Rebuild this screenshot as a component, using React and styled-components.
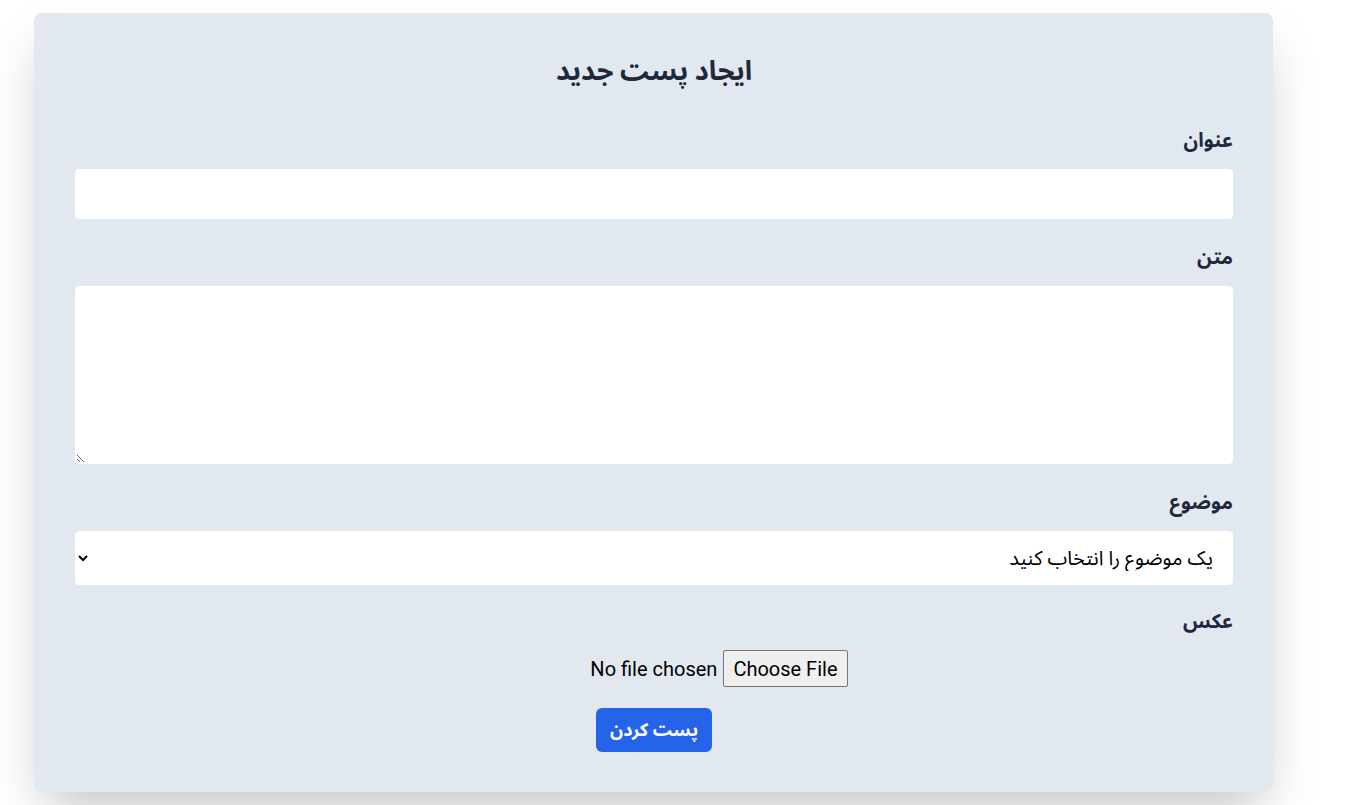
import React from 'react';
import styled, { createGlobalStyle } from 'styled-components';

const GlobalStyle = createGlobalStyle`
    html, body {
        margin: 0;
        padding: 0;
        background-color: #ffffff;
    }

    body {
        font-family: Roboto, "Noto Sans Arabic", "DejaVu Sans", sans-serif;
    }

    * {
        box-sizing: border-box;
    }
`;

const Page = styled.div`
    min-height: 805px;
    padding: 13px 0 0 34px;
`;

const Card = styled.div`
    width: 1239px;
    background-color: #e2e8f0;
    border-radius: 8px;
    box-shadow: 0 25px 50px -12px rgba(0, 0, 0, 0.25);
    padding: 40px 40px 40px 41px;
    direction: rtl;
`;

const Title = styled.h2`
    margin: 0 0 35px;
    text-align: center;
    font-size: 27px;
    line-height: 36px;
    font-weight: 700;
    color: #1e293b;
`;

const Form = styled.form`
    display: flex;
    flex-direction: column;
    gap: 22px;
`;

const Field = styled.div`
    display: flex;
    flex-direction: column;
    margin-top: ${(props) => props.$pull ? `-${props.$pull}px` : '0'};
`;

const Label = styled.label`
    display: block;
    margin-bottom: 13px;
    font-size: 20px;
    line-height: 32px;
    font-weight: 700;
    color: #1e293b;
`;

const TextInput = styled.input`
    width: 100%;
    height: 50px;
    padding: 12px;
    border: 1px solid #ffffff;
    border-radius: 4px;
    background: #ffffff;
    font: inherit;
    font-size: 16px;
    outline: none;
`;

const TextArea = styled.textarea`
    width: 100%;
    height: 178px;
    padding: 12px;
    border: 1px solid #ffffff;
    border-radius: 4px;
    background: #ffffff;
    font: inherit;
    font-size: 16px;
    outline: none;
    resize: vertical;
`;

const Select = styled.select`
    width: 100%;
    height: 54px;
    padding: 12px 15px 12px 12px;
    border: 1px solid #ffffff;
    border-radius: 4px;
    background: #ffffff;
    font: inherit;
    font-size: 20px;
    color: #000000;
    outline: none;
`;

const FileRow = styled.div`
    display: flex;
    justify-content: center;
    padding-left: 4px;
`;

const FileInput = styled.input`
    font: inherit;
    font-size: 20px;
    line-height: 37px;
    color: #000000;

    &::file-selector-button {
        height: 37px;
        margin-inline-end: 6px;
        padding: 0 9px;
        border: 1px solid #767676;
        border-radius: 2px;
        background-color: #efefef;
        color: #000000;
        font: inherit;
        font-size: 20px;
    }
`;

const SubmitRow = styled.div`
    display: flex;
    justify-content: center;
    margin-top: -2px;
`;

const SubmitButton = styled.button`
    padding: 8px 14px;
    border: none;
    border-radius: 6px;
    background-color: #2563eb;
    color: #ffffff;
    font: inherit;
    font-size: 18px;
    line-height: 28px;
    font-weight: 700;
    cursor: pointer;
`;

const App = () => {
    return (
        <>
            <GlobalStyle />
            <Page>
                <Card>
                    <Title>ایجاد پست جدید</Title>
                    <Form onSubmit={(e) => e.preventDefault()}>
                        <Field>
                            <Label htmlFor='title'>عنوان</Label>
                            <TextInput id='title' type='text' />
                        </Field>
                        <Field>
                            <Label htmlFor='body'>متن</Label>
                            <TextArea id='body' />
                        </Field>
                        <Field>
                            <Label htmlFor='topic'>موضوع</Label>
                            <Select id='topic' defaultValue=''>
                                <option value=''>یک موضوع را انتخاب کنید</option>
                            </Select>
                        </Field>
                        <Field $pull={2}>
                            <Label htmlFor='image'>عکس</Label>
                            <FileRow>
                                <FileInput id='image' type='file' />
                            </FileRow>
                        </Field>
                        <SubmitRow>
                            <SubmitButton type='submit'>پست کردن</SubmitButton>
                        </SubmitRow>
                    </Form>
                </Card>
            </Page>
        </>
    );
};

export default App;
